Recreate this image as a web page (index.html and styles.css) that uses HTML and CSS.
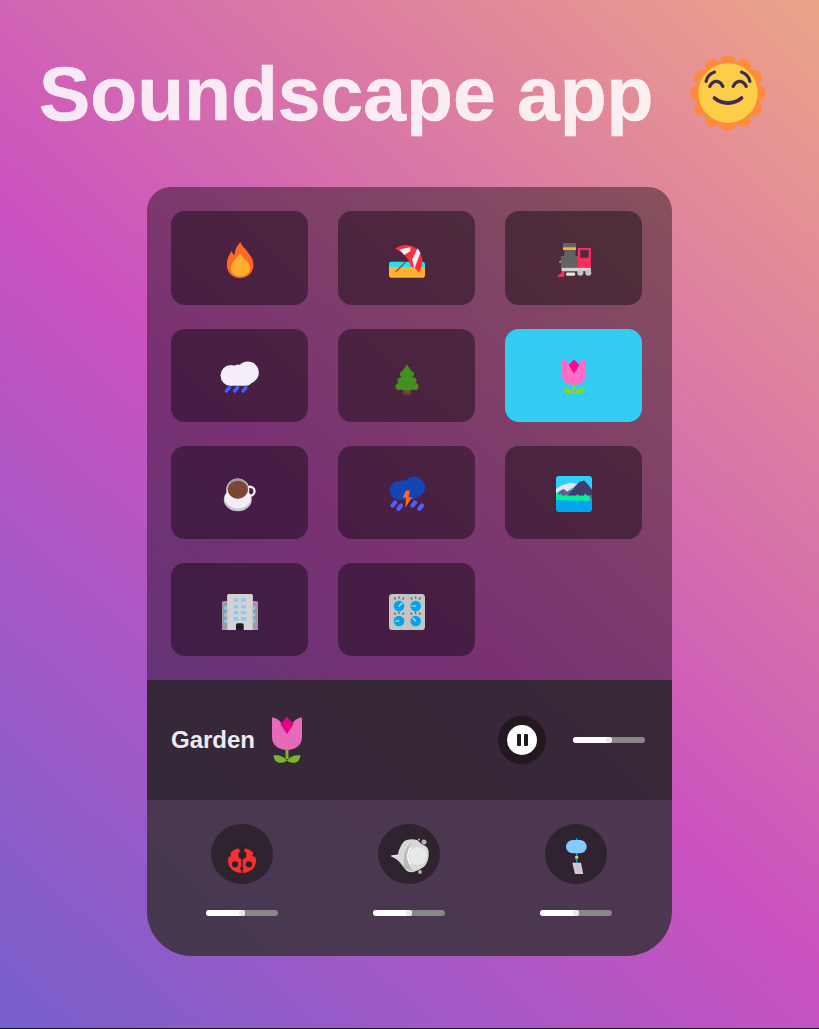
FILE: index.html
```html
<!DOCTYPE html>
<html lang="en">
<head>
<meta charset="utf-8">
<title>Soundscape app</title>
<link rel="stylesheet" href="styles.css">
</head>
<body>
<header class="title-row">
  <h1 class="title">Soundscape app</h1>
  <svg class="sun" viewBox="0 0 32 32" aria-hidden="true">
    <g fill="#ff8a3c">
      <circle cx="16" cy="16" r="13.300"/>
      <circle cx="16" cy="3.800" r="3.300"/><circle cx="22.100" cy="5.430" r="3.300"/><circle cx="26.570" cy="9.900" r="3.300"/><circle cx="28.200" cy="16" r="3.300"/><circle cx="26.570" cy="22.100" r="3.300"/><circle cx="22.100" cy="26.570" r="3.300"/><circle cx="16" cy="28.200" r="3.300"/><circle cx="9.900" cy="26.570" r="3.300"/><circle cx="5.430" cy="22.100" r="3.300"/><circle cx="3.800" cy="16" r="3.300"/><circle cx="5.430" cy="9.900" r="3.300"/><circle cx="9.900" cy="5.430" r="3.300"/>
    </g>
    <circle fill="#fccd47" cx="16" cy="16" r="12.200"/>
    <g fill="none" stroke="#402a56" stroke-width="1.300" stroke-linecap="round">
      <path d="M7 11.200c.4-1.800 1.700-3.200 3.500-3.800"/>
      <path d="M25 11.200c-.4-1.800-1.700-3.200-3.500-3.800"/>
      <path d="M8.500 13.300c.7-1.400 1.600-2.100 2.700-2.100s2 .7 2.700 2.100"/>
      <path d="M18.100 13.300c.7-1.400 1.600-2.100 2.700-2.100s2 .7 2.700 2.100"/>
      <path stroke-width="1.600" d="M10.500 18.100c1.500 1.300 3.400 2 5.500 2s4-.7 5.500-2"/>
    </g>
  </svg>
</header>

<main class="panel">
  <section class="grid">
    <button class="tile">
      <svg class="icon" viewBox="0 0 32 32"><path fill="#ff6723" d="M16.400 0C17 3 20 5 23 9c3 4 5 7 5 11 0 7-5 12-12 12S4.300 27 4.300 20c0-6 2.700-9.500 4.200-12 .5 2 1.500 3 2.500 3.500C11.500 7 13.500 3 16.400 0z"/><path fill="#ffb02e" d="M16 10c2 4 9 8 9 13 0 4.500-4 7.500-8.600 7.500-4.900 0-8.600-3-8.600-7.500 0-5 6.200-9 8.200-13z"/></svg>
    </button>
    <button class="tile">
      <svg class="icon" viewBox="0 0 32 32"><path fill="#ffb02e" d="M0 20h32v9.700a2 2 0 0 1-2 2H2a2 2 0 0 1-2-2z"/><path fill="#26e0f0" d="M2 17.500h28a2 2 0 0 1 2 2v2.700H0v-2.700a2 2 0 0 1 2-2z"/><path fill="#ff2d3a" d="M5.300 6.200C9 3 13 2.500 17 2.800c7 .7 12 6.200 12.500 12.200.5 5-1 9-3 12-2-3-4.500-4.500-6.900-5-1-4-3-7.700-6-10.400-3-2.900-5.800-4.600-8.300-5.400z"/><path fill="#f3eef8" d="M9.200 6.500L19 4.700v3.300l-5.400 3.600zM20.600 15l4.900-9.400 2.400 3.900-5.400 14.400z"/><path fill="none" stroke="#7d4533" stroke-width="1" stroke-linecap="round" d="M15 17.500L6.200 26.400"/></svg>
    </button>
    <button class="tile">
      <svg class="icon" viewBox="0 0 32 32"><path fill="#ff2d5e" d="M.6 30.800L7.400 25v5.800zM19.500 5.300H31V23H19.500z"/><rect x="21.600" y="7" width="7.400" height="7" fill="#4e2a3f"/><path fill="#636363" d="M6.200.9h11.600v6.500h-.5v5.100h2.200V23H4.400V12.500h3.100V7.400H6.200z"/><rect x="6.200" y="4.700" width="11.600" height="2.400" fill="#ffb02e"/><circle cx="3.700" cy="17.500" r=".8" fill="#ffb02e"/><rect x="5" y="23" width="26" height="3" fill="#d3d3d3"/><rect x="9" y="27" width="8" height="3" rx="1" fill="#e6e6e6"/><circle cx="21.600" cy="27.300" r="2.700" fill="#c4c4c4"/><circle cx="28.700" cy="27.300" r="2.700" fill="#c4c4c4"/></svg>
    </button>
    <button class="tile">
      <svg class="icon icon-wide" viewBox="0 -1.500 40 36"><g fill="#f3eef8"><circle cx="11" cy="15" r="10.500"/><circle cx="27.800" cy="12" r="11"/><circle cx="18" cy="10" r="6"/><rect x="8" y="10" width="25" height="15.300" rx="7"/></g><path fill="none" stroke="#3f5fff" stroke-width="3.500" stroke-linecap="round" d="M9.400 27L6.400 30.500M17.700 27L14.700 30.500M26 27L23 30.500"/></svg>
    </button>
    <button class="tile">
      <svg class="icon" viewBox="0 0 36 36"><rect x="14" y="30" width="8" height="5.500" fill="#6d4534"/><g fill="#44911b"><path d="M18 5.500c1.500 1.500 3 4.500 3.500 7.500h-7c.5-3 2-6 3.500-7.500z"/><ellipse cx="18" cy="14" rx="5" ry="5"/><circle cx="13.500" cy="15" r="2.600"/><circle cx="22.500" cy="15" r="2.600"/><ellipse cx="18" cy="21" rx="7" ry="6"/><circle cx="11.500" cy="21.500" r="3.100"/><circle cx="24.500" cy="21.500" r="3.100"/><ellipse cx="18" cy="27" rx="9" ry="4.500"/><circle cx="10" cy="27.500" r="3.500"/><circle cx="26" cy="27.500" r="3.500"/></g></svg>
    </button>
    <button class="tile tile-active">
      <svg class="icon icon-tulip" viewBox="0 0 32 48"><path fill="#ff6dc6" d="M0 1c5 .6 8.500 2.800 10.500 6.500L16 1.500l5.500 6C23.500 3.800 27 1.600 32 1v20c0 8.500-7 13.500-16 13.500S0 29.500 0 21z"/><path fill="#f70a8d" d="M16 .5l7 7.500-7 11.500L9 8z"/><rect x="14.500" y="34" width="3" height="8.500" fill="#86d72f"/><path fill="#86d72f" d="M2 39c5-.8 10.500 1 14 5.800C11 48 4 48 2 39zM30 39c-5-.8-10.500 1-14 5.800 5 3.200 12 3.200 14-5.800z"/></svg>
    </button>
    <button class="tile">
      <svg class="icon" viewBox="0 0 36 36"><ellipse cx="15.800" cy="23.500" rx="14" ry="11.700" fill="#c9c4cf"/><ellipse cx="15.800" cy="22.300" rx="13" ry="10.300" fill="#f3eef8"/><circle cx="28" cy="15.200" r="4.500" fill="none" stroke="#f3eef8" stroke-width="2.400"/><circle cx="15.800" cy="14" r="11.500" fill="#f3eef8"/><ellipse cx="15.800" cy="12.500" rx="10.500" ry="10" fill="#9b9b9b"/><ellipse cx="15.800" cy="13.700" rx="10" ry="9" fill="#7d4533"/></svg>
    </button>
    <button class="tile">
      <svg class="icon" viewBox="0 0 36 36"><g fill="#1345b7"><circle cx="10.300" cy="14.500" r="9.500"/><circle cx="25.300" cy="11.200" r="10.700"/><circle cx="15" cy="9.500" r="5.500"/><rect x="10" y="12" width="15" height="11.900"/></g><path fill="#ff6723" d="M17 14.500h3.800l-1.200 6.700h3.400l-6.700 10.600.7-10h-3.300z"/><g fill="none" stroke="#4f5fff" stroke-width="4.400" stroke-linecap="round"><path d="M6 26.500L3.600 29.500M11.900 29.700L9.500 32.700M26 26.500L23.600 29.500M32.900 29.700L30.500 32.700"/></g></svg>
    </button>
    <button class="tile">
      <svg class="icon" viewBox="0 0 32 32"><rect width="32" height="32" rx="3" fill="#00a6ed"/><path fill="#2fd0ff" d="M3 0h26a3 3 0 0 1 3 3v17H0V3a3 3 0 0 1 3-3z"/><path fill="#6b5a95" d="M0 17l6-6 6 2 8-3 12 7v3H0z"/><path fill="#e8e4ea" d="M0 11.500L5 8.500l8-2.500 6 1-3 3-3 1-3 3-3-2.500-4 1.500-3 2.500z"/><path fill="#433b6b" d="M11 17l6-8 4-4 4-1 3 3 4 5v5z"/><path fill="#00f397" d="M0 21.300v-5.300l1.500-2 1.500 3 1-1 1 1 3 .5 1-1.500 1 1.500 8 0 1-1.800 1 1.800 5 0 1-2.500 1.500 2.500 2.500 0v4.800z"/></svg>
    </button>
    <button class="tile">
      <svg class="icon" viewBox="0 0 32 32"><path fill="#9b9b9b" d="M0 7.700a1.500 1.500 0 0 1 1.500-1.500h3V32H0zM32 7.700a1.500 1.500 0 0 0-1.500-1.500h-3V32H32z"/><path fill="#d3d3d3" d="M4.500 1.500A1.500 1.500 0 0 1 6 0h20a1.500 1.500 0 0 1 1.500 1.500V32h-23z"/><g fill="#83cbff"><rect x="10.400" y="3.900" width="4.100" height="2.900"/><rect x="16.900" y="3.900" width="4.400" height="2.900"/><rect x="10.400" y="9.800" width="4.100" height="2.900"/><rect x="16.900" y="9.800" width="4.400" height="2.900"/><rect x="10.400" y="15.100" width="4.100" height="2.900"/><rect x="16.900" y="15.100" width="4.400" height="2.900"/><rect x="10.400" y="20.400" width="4.100" height="3.200"/><rect x="16.900" y="20.400" width="4.400" height="3.200"/><rect x="2" y="11" width="2.500" height="3"/><rect x="2" y="17" width="2.500" height="3"/><rect x="2" y="22.500" width="2.500" height="3"/><rect x="27.500" y="11" width="2" height="3"/><rect x="27.500" y="17" width="2" height="3"/><rect x="27.500" y="22.500" width="2" height="3"/></g><path fill="#1c1c1c" d="M12.400 32v-4.500a1.500 1.500 0 0 1 1.500-1.500h3.900a1.500 1.500 0 0 1 1.500 1.500V32z"/></svg>
    </button>
    <button class="tile">
      <svg class="icon" viewBox="0 0 32 32"><rect width="32" height="32" rx="3" fill="#c4c4c4"/><g fill="none" stroke="#636363" stroke-width="1.200" stroke-linecap="round"><path d="M5 3.500l.6 1M8.900 2.500v1.100M13 3.500l-.6 1M19.700 3.500l.6 1M23.700 2.500v1.100M27.700 3.500l-.6 1M5 17l.6 1M8.900 16v1.100M13 17l-.6 1M19.700 17l.6 1M23.700 16v1.100M27.700 17l-.6 1"/></g><g fill="#00a6ed"><circle cx="8.900" cy="10.700" r="4.700"/><circle cx="23.700" cy="10.700" r="4.700"/><circle cx="8.900" cy="24" r="4.700"/><circle cx="23.700" cy="24" r="4.700"/></g><g stroke="#e6e6e6" stroke-width="1" stroke-linecap="round"><path d="M8.900 10.700l2.700-2.700M23.700 10.700h-3.200M8.900 24H5.700M23.700 24l-2.500-2.500"/></g></svg>
    </button>
  </section>

  <section class="player">
    <div class="now">
      <span class="now-name">Garden</span>
      <svg class="now-icon" viewBox="0 0 32 48"><path fill="#e769b9" d="M1 1.500c5 .6 7.500 2.800 9.500 6L16 1.500l5.500 6c2-3.200 4.500-5.400 9.500-6V21c0 8-6.500 13-15 13S1 29 1 21z"/><path fill="#e2008b" d="M16 .5l6.700 7.500L16 18 9.300 8z"/><rect x="14.500" y="33" width="3" height="10" fill="#7ab52d"/><path fill="#7ab52d" d="M2.500 39.500c5-.8 10 .5 13.500 5-2 2-5 2.500-8 2.200-3-.5-5-3-5.500-7.200zM29.500 39.500c-5-.8-10 .5-13.500 5 2 2 5 2.500 8 2.200 3-.5 5-3 5.500-7.200z"/></svg>
    </div>
    <div class="controls">
      <button class="play">
        <span class="play-inner"><span class="bar"></span><span class="bar"></span></span>
      </button>
      <div class="slider"><span class="fill"></span><span class="knob"></span></div>
    </div>
  </section>

  <section class="mixer">
    <div class="channel">
      <div class="disc">
        <svg class="disc-icon" viewBox="0 0 32 32"><path fill="#f8312f" d="M16 8.900c7.500 0 12.400 5.300 12.400 11.500S23 31 16 31 3.600 26.600 3.600 20.400 8.500 8.900 16 8.900z"/><rect x="15.400" y="8" width="1.200" height="23" fill="#2b2030"/><circle cx="16.300" cy="15" r="3.600" fill="#2b2030"/><circle cx="16" cy="8.500" r="3" fill="#2b2030"/><circle cx="9.800" cy="23.400" r="2.800" fill="#2b2030"/><circle cx="22.200" cy="23.400" r="2.800" fill="#2b2030"/><circle cx="15.800" cy="26.900" r="1.500" fill="#2b2030"/><circle cx="4.500" cy="15" r="1.700" fill="#2b2030"/><circle cx="27" cy="15" r="1.700" fill="#2b2030"/></svg>
      </div>
      <div class="slider"><span class="fill"></span><span class="knob"></span></div>
    </div>
    <div class="channel">
      <div class="disc">
        <svg class="disc-icon disc-wind" viewBox="0 0 40 36"><circle cx="35" cy="4" r="2.500" fill="#b5b5b5"/><circle cx="30" cy="1.500" r="1" fill="#b5b5b5"/><circle cx="31" cy="34" r="1.900" fill="#b5b5b5"/><path fill="#d8d8d8" d="M1.300 18c3-1 5.500-1 8-1.700C9 14 10 12 11 10c1.500-4 3.500-7 6.700-8 3.500-1 7-1 10 0 1.800 1 3.500 2.700 5 4.300 3.500 1 6 3 6.600 5.700.8 4 .3 8.500-1 11.700-1 3-3.500 5.300-5.600 6.600-3 1.800-7 3.800-10 4-2.700.1-5-1-6.700-3.300C14 28.500 12 25 7.700 21.500 5.500 20 3.500 19 1.300 18z"/><path fill="#f5f5f5" d="M1.800 17.800c3.500-.7 6.500-.7 9-.9-2.500 1.500-5.500 1.800-9 .9z"/><path fill="#9b9b9b" opacity=".5" d="M15 29c3 3 6 4 9 3.500-3.500-3-5.500-8-5.500-14 0-6 1.500-10.500 4.500-13.500-4 2-7 6.500-8 12.500-.5 4 0 8 0 11.500z"/><circle cx="29" cy="18" r="9" fill="#e8e8e8"/><path fill="none" stroke="#fff" stroke-width="1.300" d="M22.500 9.500c-2.500 2.300-3.800 5-3.800 8.500s1.300 6.200 3.800 8.500"/></svg>
      </div>
      <div class="slider"><span class="fill"></span><span class="knob"></span></div>
    </div>
    <div class="channel">
      <div class="disc">
        <svg class="disc-icon disc-chime" viewBox="0 0 22 36"><rect x="11.100" y="0" width="1.200" height="18" fill="#00a6ed"/><rect x="1" y="2" width="20.700" height="13.300" rx="6.600" fill="#83cbff"/><circle cx="16" cy="5.500" r=".7" fill="#f8a1a1"/><circle cx="18.500" cy="7.500" r=".7" fill="#f8a1a1"/><circle cx="15.800" cy="10" r=".7" fill="#f8a1a1"/><rect x="10.200" y="17.800" width="3" height="3" fill="#ffc83d"/><rect x="11.100" y="20.500" width="1.200" height="5" fill="#00a6ed"/><path fill="#d3c9d6" d="M7.300 24.700H16L18.300 36H10z"/><circle cx="12" cy="27.500" r=".6" fill="#f8808f"/><circle cx="14" cy="29.500" r=".6" fill="#f8808f"/><circle cx="12.500" cy="31.500" r=".6" fill="#f8808f"/><circle cx="15" cy="33.500" r=".6" fill="#f8808f"/></svg>
      </div>
      <div class="slider"><span class="fill"></span><span class="knob"></span></div>
    </div>
  </section>
</main>
</body>
</html>
```
FILE: styles.css
```css
* { box-sizing: border-box; }

html {
  margin: 0;
  padding: 0;
  height: 1029px;
  background: #111;
}

body {
  width: 819px;
  height: 1028px;
  margin: 0;
  padding: 0;
  overflow: hidden;
  background: linear-gradient(43deg, #7660cc 0%, #ca52c0 46%, #eca487 100%);
  font-family: "Liberation Sans", Arial, sans-serif;
}

.title-row {
  display: flex;
  align-items: center;
  height: 187.3px;
  padding: 0 0 1px 39px;
}

.title {
  margin: 0;
  font-size: 76.8px;
  font-weight: 700;
  color: rgba(255, 255, 255, 0.86);
  line-height: 1;
  -webkit-text-stroke: 0.5px rgba(255, 255, 255, 0.86);
}

.sun {
  display: block;
  flex: none;
  width: 78px;
  height: 78px;
  margin-left: 35.5px;
}

.panel {
  width: 525px;
  margin-left: 147px;
  border-radius: 24px 24px 45px 45px;
  overflow: hidden;
  background: rgba(0, 0, 0, 0.4);
}

.grid {
  display: grid;
  grid-template-columns: repeat(3, 137px);
  grid-auto-rows: 93.25px;
  gap: 24px 30px;
  height: 493px;
  padding: 24px 30px 24px 24px;
}

.tile {
  display: flex;
  align-items: center;
  justify-content: center;
  padding: 4px 0 0;
  border: 0;
  border-radius: 14px;
  background: rgba(0, 0, 0, 0.4);
}

.tile-active { background: #35ccf3; }

.icon {
  display: block;
  width: 36px;
  height: 36px;
  overflow: visible;
}

.icon-wide { width: 40px; }

.icon-tulip { width: 24px; }

.player {
  display: flex;
  align-items: center;
  justify-content: space-between;
  height: 120px;
  padding: 0 27px 0 24px;
  background: rgba(49, 39, 50, 0.9);
}

.now {
  display: flex;
  align-items: center;
  gap: 16px;
}

.now-name {
  font-size: 24px;
  font-weight: 700;
  color: #ecebf2;
}

.now-icon {
  display: block;
  width: 32px;
  height: 48px;
}

.controls {
  display: flex;
  align-items: center;
  gap: 27px;
}

.play {
  display: flex;
  align-items: center;
  justify-content: center;
  width: 48px;
  height: 48px;
  padding: 0;
  border: 0;
  border-radius: 50%;
  background: #211820;
}

.play-inner {
  display: flex;
  align-items: center;
  justify-content: center;
  gap: 3px;
  width: 30px;
  height: 30px;
  border-radius: 50%;
  background: #fff;
}

.bar {
  width: 4px;
  height: 12px;
  border-radius: 1px;
  background: #211820;
}

.slider {
  position: relative;
  width: 72px;
  height: 6px;
  border-radius: 3px;
  background: #888;
}

.fill {
  display: block;
  width: 39px;
  height: 6px;
  border-radius: 3px;
  background: #fff;
}

.knob {
  position: absolute;
  left: 32.5px;
  top: 0;
  width: 6.5px;
  height: 6px;
  border-radius: 50%;
  background: #e8e8e8;
}

.mixer {
  display: grid;
  grid-template-columns: repeat(3, 137px);
  gap: 30px;
  height: 156px;
  padding: 24px 0 0 26.5px;
  background: rgba(66, 58, 68, 0.75);
}

.channel {
  display: flex;
  flex-direction: column;
  align-items: center;
  gap: 26px;
}

.disc {
  display: flex;
  align-items: center;
  justify-content: center;
  width: 62px;
  height: 60px;
  padding-top: 4px;
  border-radius: 50%;
  background: #2f2330;
}

.disc-icon {
  display: block;
  flex: none;
  width: 36px;
  height: 36px;
}

.disc-wind { width: 40px; }

.disc-chime { width: 22px; }
```
